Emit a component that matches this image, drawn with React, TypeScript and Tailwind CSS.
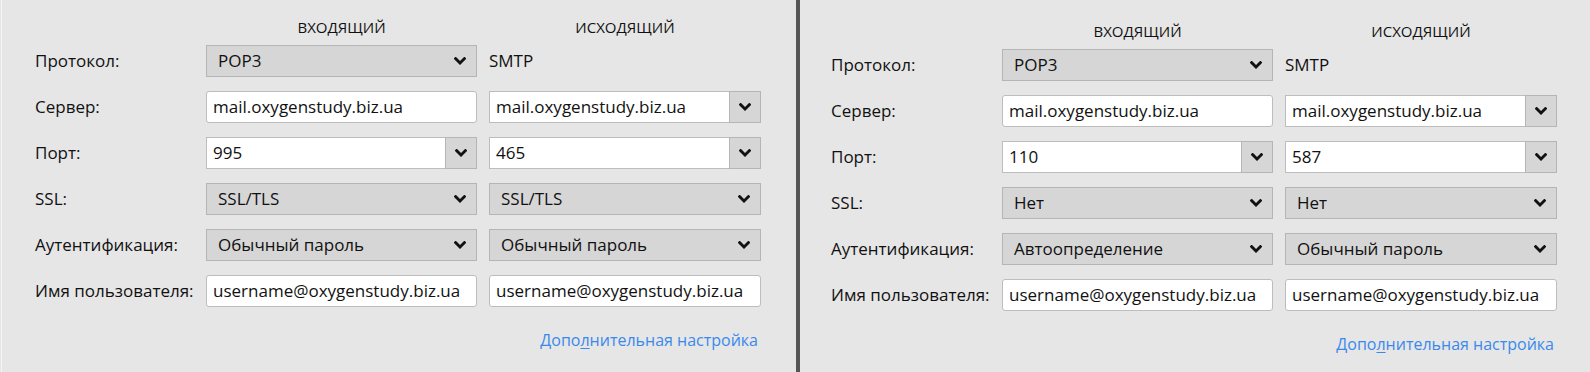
import React from "react";

type Field =
  | { kind: "select"; value: string }
  | { kind: "input"; value: string }
  | { kind: "combo"; value: string }
  | { kind: "text"; value: string };

type Row = { label: string; incoming: Field; outgoing: Field };

const leftRows: Row[] = [
  { label: "Протокол:", incoming: { kind: "select", value: "POP3" }, outgoing: { kind: "text", value: "SMTP" } },
  { label: "Сервер:", incoming: { kind: "input", value: "mail.oxygenstudy.biz.ua" }, outgoing: { kind: "combo", value: "mail.oxygenstudy.biz.ua" } },
  { label: "Порт:", incoming: { kind: "combo", value: "995" }, outgoing: { kind: "combo", value: "465" } },
  { label: "SSL:", incoming: { kind: "select", value: "SSL/TLS" }, outgoing: { kind: "select", value: "SSL/TLS" } },
  { label: "Аутентификация:", incoming: { kind: "select", value: "Обычный пароль" }, outgoing: { kind: "select", value: "Обычный пароль" } },
  { label: "Имя пользователя:", incoming: { kind: "input", value: "username@oxygenstudy.biz.ua" }, outgoing: { kind: "input", value: "username@oxygenstudy.biz.ua" } },
];

const rightRows: Row[] = [
  { label: "Протокол:", incoming: { kind: "select", value: "POP3" }, outgoing: { kind: "text", value: "SMTP" } },
  { label: "Сервер:", incoming: { kind: "input", value: "mail.oxygenstudy.biz.ua" }, outgoing: { kind: "combo", value: "mail.oxygenstudy.biz.ua" } },
  { label: "Порт:", incoming: { kind: "combo", value: "110" }, outgoing: { kind: "combo", value: "587" } },
  { label: "SSL:", incoming: { kind: "select", value: "Нет" }, outgoing: { kind: "select", value: "Нет" } },
  { label: "Аутентификация:", incoming: { kind: "select", value: "Автоопределение" }, outgoing: { kind: "select", value: "Обычный пароль" } },
  { label: "Имя пользователя:", incoming: { kind: "input", value: "username@oxygenstudy.biz.ua" }, outgoing: { kind: "input", value: "username@oxygenstudy.biz.ua" } },
];

function Chevron() {
  return (
    <svg width="12" height="8" viewBox="0 0 12 8" className="shrink-0">
      <path d="M1.6 1.6 L6 6 L10.4 1.6" fill="none" stroke="#111" strokeWidth="2.8" strokeLinecap="square" />
    </svg>
  );
}

function Control({ field }: { field: Field }) {
  if (field.kind === "text") {
    return <div className="flex h-[32px] items-center text-[#111]">{field.value}</div>;
  }
  if (field.kind === "select") {
    return (
      <div className="flex h-[32px] items-center justify-between border border-[#b5b5b5] bg-[#d6d6d6] pl-[11px] pr-[10px] text-[#111]">
        <span>{field.value}</span>
        <Chevron />
      </div>
    );
  }
  if (field.kind === "input") {
    return (
      <div className="flex h-[32px] items-center rounded-[3px] border border-[#bdbdbd] bg-white px-[6px] text-[#111]">
        {field.value}
      </div>
    );
  }
  return (
    <div className="flex h-[32px]">
      <div className="flex flex-1 items-center border border-r-0 border-[#bdbdbd] bg-white px-[6px] text-[#111]">
        {field.value}
      </div>
      <div className="flex w-[32px] items-center justify-center border border-[#b5b5b5] bg-[#d6d6d6]">
        <Chevron />
      </div>
    </div>
  );
}

function Panel({ rows, className }: { rows: Row[]; className: string }) {
  return (
    <div className={className}>
      <div className="grid grid-cols-[159px_271px_272px] gap-x-3">
        <div />
        <div className="flex h-[22px] items-center justify-center text-[15px] uppercase text-[#111]">Входящий</div>
        <div className="flex h-[22px] items-center justify-center text-[15px] uppercase text-[#111]">Исходящий</div>
      </div>
      <div className="mt-[7px] grid grid-cols-[159px_271px_272px] gap-x-3 gap-y-[14px]">
        {rows.map((row) => (
          <React.Fragment key={row.label}>
            <div className="flex h-[32px] items-center text-[#111]">{row.label}</div>
            <Control field={row.incoming} />
            <Control field={row.outgoing} />
          </React.Fragment>
        ))}
      </div>
      <div className="mt-[22px] flex h-[22px] w-[726px] items-center justify-end pr-[3px] text-[16px] text-[#3a89ec]">
        Допо<span className="underline underline-offset-2">л</span>нительная настройка
      </div>
    </div>
  );
}

export default function App() {
  return (
    <div
      className="flex h-[372px] w-[1590px] overflow-hidden bg-[#e6e6e6] text-[17px]"
      style={{ fontFamily: '"Open Sans", "Noto Sans", sans-serif' }}
    >
      <Panel rows={leftRows} className="ml-px w-[795px] border-l border-[#f4f4f4] pl-[33px] pt-[16px]" />
      <div className="w-[4px] bg-[#555555]" />
      <Panel rows={rightRows} className="flex-1 pl-[31px] pt-[20px]" />
    </div>
  );
}
